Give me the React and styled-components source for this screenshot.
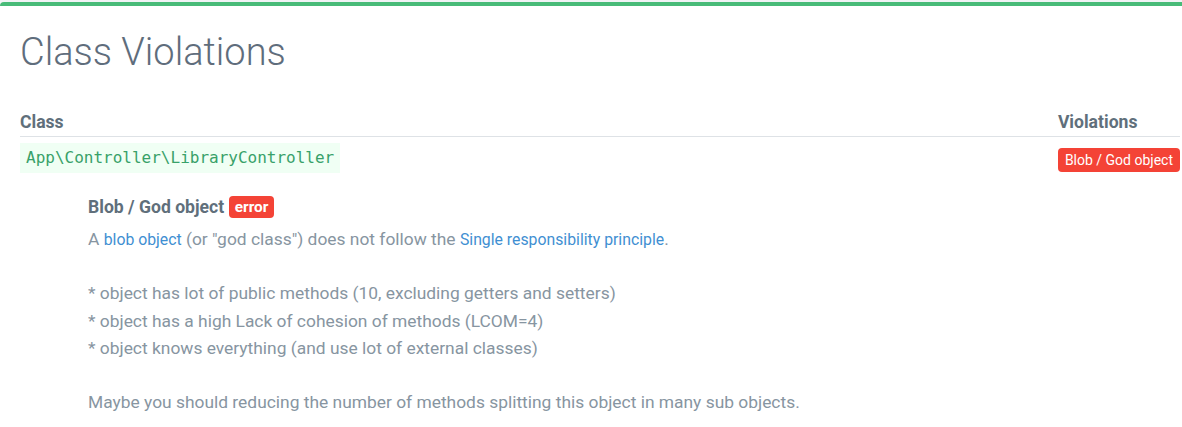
import React from 'react';
import styled, { createGlobalStyle } from 'styled-components';

const GlobalStyle = createGlobalStyle`
	html, body {
		margin: 0;
		padding: 0;
		background: #f1f3f5;
		overflow: hidden;
	}
	body {
		font-family: Roboto, "Liberation Sans", Arial, sans-serif;
	}
`;

const Card = styled.div`
	margin-top: 2px;
	margin-right: -20px;
	background: #fff;
	border-top: 4px solid #48bb78;
	border-top-left-radius: 4px;
	padding: 23px 22px 40px 20px;
	min-height: 400px;
`;

const Title = styled.h1`
	margin: 0 0 34px;
	font-size: 38px;
	line-height: 46px;
	font-weight: 300;
	color: #5f6d7c;
`;

const Table = styled.div`
	display: grid;
	grid-template-columns: 1fr auto;
`;

const HeadCell = styled.div`
	font-size: 17.6px;
	line-height: 26px;
	font-weight: 700;
	color: #606f7b;
	padding-bottom: 1px;
	border-bottom: 1px solid #dee2e6;
`;

const Cell = styled.div`
	padding-top: 6px;
`;

const Code = styled.code`
	display: inline-block;
	font-family: "DejaVu Sans Mono", "Liberation Mono", monospace;
	font-size: 16px;
	line-height: 18px;
	padding: 6px 6px;
	background: #f0fff4;
	color: #38a169;
`;

const Badge = styled.span`
	display: inline-block;
	background: #f44336;
	color: #fff;
	border-radius: 4px;
	font-size: ${(p) => (p.bold ? '15.4px' : '14px')};
	font-weight: ${(p) => (p.bold ? 700 : 400)};
	line-height: ${(p) => (p.bold ? '22px' : '24px')};
	padding: ${(p) => (p.bold ? '0 5.5px' : '0 7px')};
	margin-top: ${(p) => p.offset || 0}px;
`;

const Details = styled.div`
	grid-column: 1 / -1;
	padding: 21px 0 0 68px;
`;

const RuleTitle = styled.div`
	display: flex;
	align-items: center;
	gap: 5px;
	font-size: 17.6px;
	line-height: 26px;
	font-weight: 700;
	color: #606f7b;
`;

const Description = styled.p`
	margin: 6px 0 0;
	font-size: 17.4px;
	line-height: 27.2px;
	font-weight: 400;
	color: #8795a1;
`;

const Link = styled.a`
	font-size: 15.8px;
	color: #3f8fd2;
	text-decoration: none;
`;

export default function App() {
	return (
		<>
			<GlobalStyle />
			<Card>
				<Title>Class Violations</Title>
				<Table>
					<HeadCell>Class</HeadCell>
					<HeadCell>Violations</HeadCell>
					<Cell>
						<Code>App\Controller\LibraryController</Code>
					</Cell>
					<Cell>
						<Badge offset={5}>Blob / God object</Badge>
					</Cell>
					<Details>
						<RuleTitle>
							Blob / God object <Badge bold>error</Badge>
						</RuleTitle>
						<Description>
							A <Link href="#">blob object</Link> (or "god class") does not follow the{' '}
							<Link href="#">Single responsibility principle</Link>.
							<br />
							<br />
							* object has lot of public methods (10, excluding getters and setters)
							<br />
							* object has a high Lack of cohesion of methods (LCOM=4)
							<br />
							* object knows everything (and use lot of external classes)
							<br />
							<br />
							Maybe you should reducing the number of methods splitting this object in many sub objects.
						</Description>
					</Details>
				</Table>
			</Card>
		</>
	);
}
